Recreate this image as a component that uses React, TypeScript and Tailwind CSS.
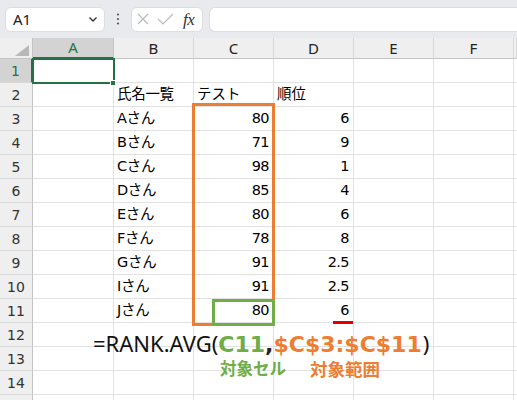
import React from 'react';

const COLS = ['A', 'B', 'C', 'D', 'E', 'F', ''];

type Row = { name?: string; score?: string; rank?: string; header?: boolean };

const DATA: Record<number, Row> = {
  2: { name: '氏名一覧', score: 'テスト', rank: '順位', header: true },
  3: { name: 'Aさん', score: '80', rank: '6' },
  4: { name: 'Bさん', score: '71', rank: '9' },
  5: { name: 'Cさん', score: '98', rank: '1' },
  6: { name: 'Dさん', score: '85', rank: '4' },
  7: { name: 'Eさん', score: '80', rank: '6' },
  8: { name: 'Fさん', score: '78', rank: '8' },
  9: { name: 'Gさん', score: '91', rank: '2.5' },
  10: { name: 'Iさん', score: '91', rank: '2.5' },
  11: { name: 'Jさん', score: '80', rank: '6' },
};

function Toolbar() {
  return (
    <div className="h-[38px] bg-[#e8eaed] flex items-center pl-[5px] gap-[6px]">
      {/* Name box */}
      <div className="w-[100px] h-[25px] bg-white rounded-[6px] border border-[#dcdee2] flex items-center justify-between pl-[7px] pr-[6px]">
        <span className="text-[15px] text-[#222] font-['Noto_Sans',sans-serif] leading-none">A1</span>
        <svg width="10" height="7" viewBox="0 0 10 7" fill="none">
          <path d="M1.5 1.5 L5 5 L8.5 1.5" stroke="#333" strokeWidth="1.4" />
        </svg>
      </div>
      <svg width="12" height="12" viewBox="0 0 4 12" className="mx-[1px]">
        <circle cx="2" cy="1.5" r="1.1" fill="#555" />
        <circle cx="2" cy="6" r="1.1" fill="#555" />
        <circle cx="2" cy="10.5" r="1.1" fill="#555" />
      </svg>
      {/* Function box */}
      <div className="w-[72px] h-[25px] bg-white rounded-[6px] border border-[#dcdee2] flex items-center pl-[5px] gap-[8px]">
        <svg width="12" height="12" viewBox="0 0 12 12">
          <path d="M1 1 L11 11 M11 1 L1 11" stroke="#b9b9b9" strokeWidth="1.1" />
        </svg>
        <svg width="17" height="12" viewBox="0 0 17 12" fill="none">
          <path d="M1 6 L6 11 L16 1" stroke="#b9b9b9" strokeWidth="1.1" />
        </svg>
        <span className="text-[17px] italic text-[#333] font-['Liberation_Serif',serif] leading-none ml-[1px] tracking-[-0.5px]">fx</span>
      </div>
      <div className="flex-1 h-[25px] bg-white rounded-l-[6px] border border-r-0 border-[#dcdee2]" />
    </div>
  );
}

function Sheet() {
  const rows = Array.from({ length: 15 }, (_, i) => i + 1);
  return (
    <div className="relative grid grid-cols-[33px_81px_80px_80px_80px_80px_80px_1fr] auto-rows-[24px] grid-rows-[21px] font-['DejaVu_Sans','Noto_Sans_CJK_JP',sans-serif] text-black">
      {/* header row */}
      <div className="bg-[#efefef] border-r border-b border-[#c4c4c4] relative">
        <svg width="14" height="11" viewBox="0 0 14 11" className="absolute left-[15px] top-[7px]">
          <polygon points="14,0 14,11 0,11" fill="#b8b8b8" />
        </svg>
      </div>
      {COLS.map((c, i) => (
        <div
          key={c + i}
          className={
            i === 0
              ? 'bg-[#d3d3d3] border-r border-[#c4c4c4] border-b-2 border-b-[#217346] text-[#217346] flex items-center justify-center text-[15px] font-["Noto_Sans",sans-serif]'
              : 'bg-[#efefef] border-r border-b border-r-[#d8d8d8] border-b-[#c4c4c4] text-[#222] flex items-center justify-center text-[15px] font-["Noto_Sans",sans-serif]'
          }
        >
          {c}
        </div>
      ))}
      {rows.map((r) => {
        const d = DATA[r] || {};
        return (
          <React.Fragment key={r}>
            <div
              className={
                r === 1
                  ? 'bg-[#d3d3d3] border-b border-[#d8d8d8] border-r-2 border-r-[#217346] text-[#217346] flex items-center justify-center text-[14px] pt-[2px]'
                  : 'bg-[#efefef] border-b border-[#d8d8d8] border-r border-r-[#c4c4c4] text-[#333] flex items-center justify-center text-[14px] pt-[2px]'
              }
            >
              {r < 15 ? r : null}
            </div>
            <div className="border-r border-b border-[#e1e1e1]" />
            <div className="border-r border-b border-[#e1e1e1] flex items-center pl-[3px] text-[14.5px] tracking-[-0.3px] whitespace-nowrap">
              {d.name}
            </div>
            <div
              className={
                d.header
                  ? 'border-r border-b border-[#e1e1e1] flex items-center pl-[3px] text-[14.5px] whitespace-nowrap'
                  : 'border-r border-b border-[#e1e1e1] flex items-center justify-end pr-[4px] text-[14.5px] tracking-[-0.6px]'
              }
            >
              {d.score}
            </div>
            <div
              className={
                d.header
                  ? 'border-r border-b border-[#e1e1e1] flex items-center pl-[3px] text-[14.5px] whitespace-nowrap'
                  : 'border-r border-b border-[#e1e1e1] flex items-center justify-end pr-[4px] text-[14.5px] tracking-[-0.6px]'
              }
            >
              {d.rank}
            </div>
            <div className="border-r border-b border-[#e1e1e1]" />
            <div className="border-r border-b border-[#e1e1e1]" />
            <div className="border-b border-[#e1e1e1]" />
          </React.Fragment>
        );
      })}

      {/* A1 selection */}
      <div className="absolute left-[32px] top-[20px] w-[83px] h-[26px] border-2 border-[#217346] pointer-events-none" />
      <div className="absolute left-[110px] top-[42px] w-[6px] h-[6px] bg-[#217346] border border-white pointer-events-none" />

      {/* annotations */}
      <div className="absolute left-[192px] top-[65px] w-[83px] h-[223px] border-[3px] border-[#ed7d31] pointer-events-none" />
      <div className="absolute left-[212px] top-[261px] w-[63px] h-[27px] border-[3px] border-[#70ad47] pointer-events-none" />
      <div className="absolute left-[333px] top-[283px] w-[20px] h-[3px] bg-[#e00000] pointer-events-none" />

      <div className="absolute left-[93px] top-[294px] whitespace-nowrap leading-none flex items-baseline">
        <span className="text-[22px] font-['Noto_Sans',sans-serif] text-[#111]">=RANK.AVG(</span>
        <span className="text-[22px] font-bold font-['DejaVu_Sans',sans-serif] text-[#70ad47]">C11</span>
        <span className="text-[22px] font-bold font-['DejaVu_Sans',sans-serif] text-[#222]">,</span>
        <span className="text-[22px] font-bold font-['DejaVu_Sans',sans-serif] text-[#ed7d31]">$C$3:$C$11</span>
        <span className="text-[22px] font-['Noto_Sans',sans-serif] text-[#111] ml-[1px]">)</span>
      </div>
      <div className="absolute left-[220px] top-[322px] text-[16.5px] font-bold font-['Noto_Sans_CJK_JP',sans-serif] text-[#70ad47] leading-none">
        対象セル
      </div>
      <div className="absolute left-[310px] top-[322px] text-[17.5px] font-bold font-['Noto_Sans_CJK_JP',sans-serif] text-[#ed7d31] leading-none">
        対象範囲
      </div>
    </div>
  );
}

export default function App() {
  return (
    <div className="w-[517px] h-[400px] overflow-hidden bg-white">
      <Toolbar />
      <Sheet />
    </div>
  );
}
